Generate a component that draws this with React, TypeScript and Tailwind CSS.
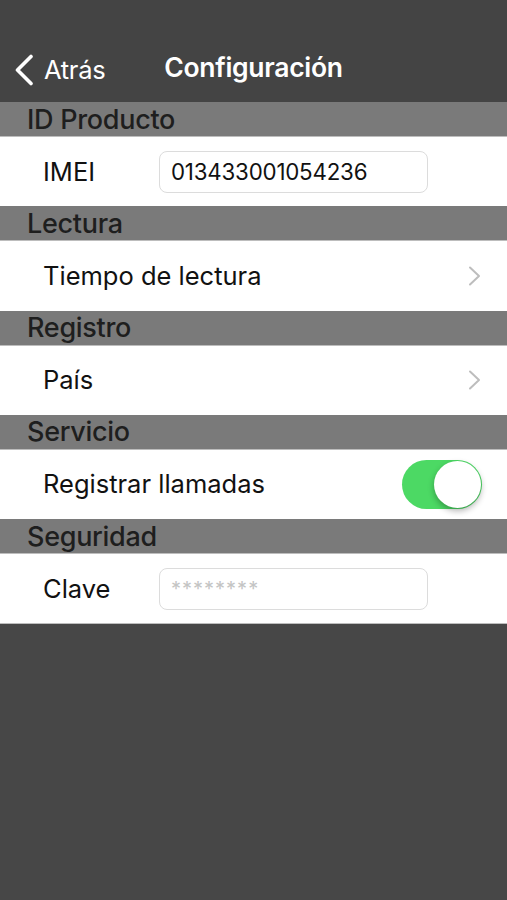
const font = { fontFamily: "Inter, 'Liberation Sans', sans-serif" };

const Chevron = () => (
    <svg width="13" height="20" viewBox="0 0 13 20" fill="none" className="mr-[1px]">
        <polyline points="2,1.5 11,10 2,18.5" stroke="#bdbdbd" strokeWidth="2" strokeLinecap="round" strokeLinejoin="round" />
    </svg>
);

const SectionHeader = ({ title }: { title: string }) => (
    <div className="h-[35px] bg-[#7a7a7a] border-b border-[#bdbdbd] flex items-center px-[27px]">
        <span className="text-[27px] font-medium text-[#1e1e1e] leading-none tracking-[-0.3px]">{title}</span>
    </div>
);

const Row = ({ children }: { children: React.ReactNode }) => (
    <div className="h-[69.3px] bg-white flex items-center pl-[43px] pr-[25px]">{children}</div>
);

const App = () => {
    return (
        <div className="w-[507px] h-[900px] bg-[#474747] flex flex-col" style={font}>
            {/* Nav bar */}
            <div className="h-[102px] bg-[#444444] relative flex items-center justify-center pt-[34px]">
                <div className="absolute left-[13px] top-[51px] flex items-center text-white">
                    <svg width="22" height="32" viewBox="0 0 22 32" fill="none">
                        <polyline points="18,2.5 4.5,16 18,29.5" stroke="white" strokeWidth="3.6" strokeLinecap="round" strokeLinejoin="round" />
                    </svg>
                    <span className="text-[25.5px] ml-[9px] tracking-[-0.3px]">Atrás</span>
                </div>
                <span className="text-white text-[26.5px] font-semibold tracking-[-0.3px]">Configuración</span>
            </div>

            <SectionHeader title="ID Producto" />
            <Row>
                <span className="text-[25.5px] text-[#111] w-[116px]">IMEI</span>
                <div className="w-[269px] h-[42px] border border-[#dcdcdc] rounded-[8px] flex items-center px-[11px]">
                    <span className="text-[22.3px] text-[#111] tracking-[-0.2px]">013433001054236</span>
                </div>
            </Row>

            <SectionHeader title="Lectura" />
            <Row>
                <span className="text-[25.5px] text-[#111] flex-1">Tiempo de lectura</span>
                <Chevron />
            </Row>

            <SectionHeader title="Registro" />
            <Row>
                <span className="text-[25.5px] text-[#111] flex-1">País</span>
                <Chevron />
            </Row>

            <SectionHeader title="Servicio" />
            <Row>
                <span className="text-[25.5px] text-[#111] flex-1">Registrar llamadas</span>
                <div className="w-[80px] h-[49px] rounded-full bg-[#4cd964] relative">
                    <div className="absolute right-[1px] top-[1px] w-[47px] h-[47px] rounded-full bg-white shadow-[0_3px_6px_rgba(0,0,0,0.3)]" />
                </div>
            </Row>

            <SectionHeader title="Seguridad" />
            <Row>
                <span className="text-[25.5px] text-[#111] w-[116px]">Clave</span>
                <div className="w-[269px] h-[42px] border border-[#dcdcdc] rounded-[8px] flex items-center px-[11px]">
                    <span className="text-[20px] text-[#c4c4c4] tracking-[1px]">********</span>
                </div>
            </Row>
            <div className="border-t border-[#bdbdbd]" />
        </div>
    );
};

export default App;
